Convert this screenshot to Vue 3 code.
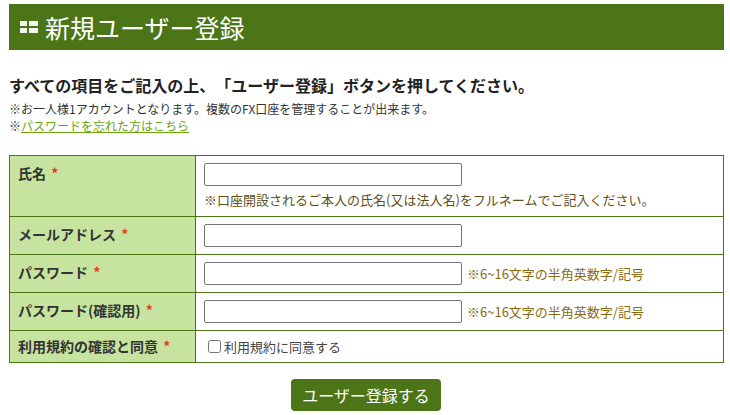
<script setup>
const rows = [
  { label: "氏名", type: "text", note: "※口座開設されるご本人の氏名(又は法人名)をフルネームでご記入ください。" },
  { label: "メールアドレス", type: "text" },
  { label: "パスワード", type: "password", hint: "※6~16文字の半角英数字/記号" },
  { label: "パスワード(確認用)", type: "password", hint: "※6~16文字の半角英数字/記号" }
];
</script>

<template>
  <div class="page">
    <h1 class="title">
      <svg class="title-icon" width="18" height="12" viewBox="0 0 18 12">
        <path fill="#f4f7ee" d="M0 0h7v5H0zM9 0h9v5H9zM0 7h7v5H0zM9 7h9v5H9z" />
      </svg>
      新規ユーザー登録
    </h1>

    <p class="lead">すべての項目をご記入の上、「ユーザー登録」ボタンを押してください。</p>
    <p class="small">※お一人様1アカウントとなります。複数のFX口座を管理することが出来ます。</p>
    <p class="small">※<a href="#" class="link">パスワードを忘れた方はこちら</a></p>

    <table class="form">
      <tbody>
        <tr v-for="row in rows" :key="row.label">
          <th>{{ row.label }} <span class="req">*</span></th>
          <td>
            <div class="field">
              <input class="input" :type="row.type" />
              <span v-if="row.hint" class="hint">{{ row.hint }}</span>
            </div>
            <div v-if="row.note" class="note">{{ row.note }}</div>
          </td>
        </tr>
        <tr class="agree-row">
          <th>利用規約の確認と同意 <span class="req">*</span></th>
          <td>
            <label class="agree"><input type="checkbox" class="check" />利用規約に同意する</label>
          </td>
        </tr>
      </tbody>
    </table>

    <div class="actions">
      <button class="submit" type="button">ユーザー登録する</button>
    </div>
  </div>
</template>

<style scoped>
.page {
  width: 715px;
  margin-left: 9px;
  padding-top: 4px;
  font-family: "Noto Sans CJK JP", "Noto Sans", sans-serif;
  color: #333;
  text-spacing-trim: space-all;
}
.title {
  display: flex;
  align-items: center;
  gap: 7px;
  height: 46px;
  margin: 0;
  padding-left: 11px;
  background: #4c7518;
  color: #fff;
  font-size: 25px;
  font-weight: 400;
}
.lead {
  margin: 24px 0 0;
  font-size: 16px;
  line-height: 22px;
  font-weight: 700;
  color: #222;
}
.small {
  margin: 0;
  font-size: 12px;
  line-height: 17px;
}
.lead + .small {
  margin-top: 4px;
}
.link {
  color: #6aa510;
  text-decoration: underline;
}
.form {
  width: 715px;
  margin-top: 21px;
  border-collapse: collapse;
  table-layout: fixed;
}
th,
td {
  border: 1px solid #4c7518;
  padding: 7px 8px;
  vertical-align: top;
}
th {
  box-sizing: border-box;
  width: 186px;
  background: #c7e3a0;
  font-size: 14px;
  line-height: 20px;
  font-weight: 700;
  text-align: left;
  color: #333;
}
.req {
  color: #e0401a;
  margin-left: 2px;
}
.field {
  display: flex;
  align-items: center;
  gap: 5px;
  height: 23px;
}
.input {
  box-sizing: border-box;
  width: 258px;
  height: 23px;
  border: 1px solid #767676;
  border-radius: 2px;
  padding: 0 2px;
  background: #fff;
}
.hint {
  font-size: 13px;
  color: #8a6a14;
}
.note {
  margin-top: 5px;
  font-size: 13px;
  line-height: 18px;
  color: #5e5020;
}
.agree-row th,
.agree-row td {
  padding-top: 5px;
  padding-bottom: 6px;
}
.agree {
  display: flex;
  align-items: center;
  height: 20px;
  padding-left: 4px;
  font-size: 13px;
  color: #444;
}
.check {
  width: 13px;
  height: 13px;
  margin: 1px 3px 0 0;
}
.actions {
  display: flex;
  justify-content: center;
  margin-top: 16px;
  padding-right: 1px;
}
.submit {
  width: 150px;
  height: 32px;
  border: none;
  border-radius: 4px;
  background: #4c7518;
  color: #fff;
  font-family: inherit;
  font-size: 16px;
}
</style>

<style>
body {
  background: #fff;
}
</style>
